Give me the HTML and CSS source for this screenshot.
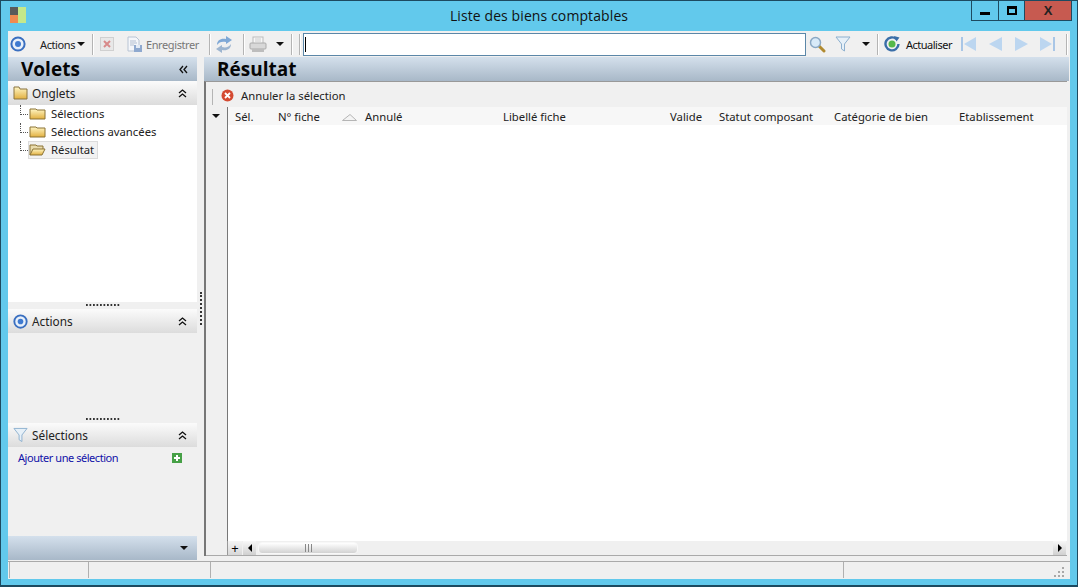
FILE: index.html
```html
<!DOCTYPE html>
<html lang="fr">
<head>
  <meta charset="UTF-8" />
  <title>Liste des biens comptables</title>
  <link rel="stylesheet" href="styles.css">
</head>
<body>
  <svg class="svg-defs" width="0" height="0">
    <defs>
      <linearGradient id="folderFill" x1="0" y1="0" x2="0" y2="1">
        <stop offset="0" stop-color="#fff6c4"/>
        <stop offset="1" stop-color="#e2b040"/>
      </linearGradient>
    </defs>
  </svg>
  <div class="window">
    <div class="titlebar">
      <div class="title-left">
        <svg class="app-icon" width="16" height="16" viewBox="0 0 16 16"><rect width="8" height="8" fill="#5a5a5a"/><rect y="8" width="8" height="8" fill="#f08a50"/><rect x="8" width="8" height="16" fill="#c4e88a"/></svg>
      </div>
      <div class="title-text">Liste des biens comptables</div>
      <div class="win-controls">
        <div class="win-btn btn-min"><span class="min-glyph"></span></div>
        <div class="win-btn btn-max"><span class="max-glyph"></span></div>
        <div class="win-btn btn-close">X</div>
      </div>
    </div>

    <div class="toolbar">
      <svg class="t-actions-icon" width="16" height="16" viewBox="0 0 16 16"><circle cx="8" cy="8" r="6.600" fill="#e8f0fa" stroke="#3a6fc0" stroke-width="2"/><circle cx="8" cy="8" r="3" fill="#3f7ad0"/></svg>
      <span class="t-actions">Actions</span>
      <span class="caret t-actions-caret"></span>
      <span class="sep sep-a"></span>
      <svg class="t-delete" width="14" height="14" viewBox="0 0 14 14"><rect x="0.500" y="0.500" width="13" height="13" fill="#e8e8e8" stroke="#d0d0d0"/><path d="M4 4l6 6M10 4l-6 6" stroke="#d88a8a" stroke-width="2"/></svg>
      <svg class="t-save" width="17" height="17" viewBox="0 0 17 17"><path d="M2 1h8l3 3v11H2z" fill="#f4f6fa" stroke="#b8c4d4"/><path d="M4 5h6M4 7h7M4 9h4" stroke="#b4bfd0"/><rect x="8" y="9" width="8" height="7" fill="#8fa9cf"/><rect x="10" y="9" width="4" height="3" fill="#e4ebf5"/></svg>
      <span class="t-label t-save-label">Enregistrer</span>
      <span class="sep sep-b"></span>
      <svg class="t-sync" width="16" height="17" viewBox="0 0 16 17"><path d="M1 9c0-5 4-7 9-6V0l6 4-6 4V6C6 5 3 6 1 9z" fill="#7fa8d6"/><path d="M15 8c0 5-4 7-9 6v3l-6-4 6-4v2c4 1 7 0 9-3z" fill="#9db5d0"/></svg>
      <span class="sep sep-c"></span>
      <svg class="t-print" width="18" height="17" viewBox="0 0 18 17"><rect x="4" y="1" width="10" height="7" fill="#f7f7f7" stroke="#bbb"/><path d="M6 3h6M6 5h6" stroke="#ccc"/><rect x="1" y="7" width="16" height="6" rx="1" fill="#d8d8d8" stroke="#aaa"/><rect x="3" y="13" width="12" height="3" fill="#bdbdbd"/></svg>
      <span class="caret t-print-caret"></span>
      <span class="sep sep-d"></span>
      <span class="sep sep-e"></span>
      <div class="search-box"><span class="text-cursor"></span></div>
      <svg class="t-search" width="17" height="17" viewBox="0 0 17 17"><path d="M10 10l5 5" stroke="#b08a30" stroke-width="3" stroke-linecap="round"/><circle cx="6.500" cy="6.500" r="5" fill="#d8eaf8" stroke="#8aa8c4" stroke-width="1.500"/></svg>
      <svg class="t-filter" width="16" height="16" viewBox="0 0 16 16"><path d="M1 1h14L9.500 8v7l-3-2V8z" fill="#e6f0f8" stroke="#8db0cf"/></svg>
      <span class="caret t-filter-caret"></span>
      <span class="sep sep-f"></span>
      <svg class="t-refresh" width="16" height="16" viewBox="0 0 16 16"><path d="M12.500 3.200A6.500 6.500 0 1 0 14.500 8" fill="none" stroke="#3a6ea8" stroke-width="2.400"/><path d="M10 0l5.500 1.500-3 4z" fill="#3a6ea8"/><circle cx="8" cy="8" r="3.500" fill="#56b84a"/></svg>
      <span class="t-label t-refresh-label">Actualiser</span>
      <svg class="t-first" width="15" height="14" viewBox="0 0 15 14"><rect x="0" y="0" width="2" height="14" fill="#a9c6e6"/><path d="M15 0v14L3 7z" fill="#bcd6f0"/></svg>
      <svg class="t-prev" width="13" height="14" viewBox="0 0 13 14"><path d="M13 0v14L0 7z" fill="#bcd6f0"/></svg>
      <svg class="t-next" width="13" height="14" viewBox="0 0 13 14"><path d="M0 0v14l13-7z" fill="#bcd6f0"/></svg>
      <svg class="t-last" width="15" height="14" viewBox="0 0 15 14"><path d="M0 0v14l12-7z" fill="#bcd6f0"/><rect x="13" y="0" width="2" height="14" fill="#a9c6e6"/></svg>
      <span class="sep sep-g"></span>
    </div>

    <div class="main">
      <div class="volets">
        <div class="pane-title">
          <span>Volets</span>
          <svg class="collapse-left" width="9" height="9" viewBox="0 0 9 9"><path d="M4 1L1 4.500 4 8M8 1L5 4.500 8 8" fill="none" stroke="#111" stroke-width="1.300"/></svg>
        </div>

        <div class="section-head">
          <svg class="head-icon" width="15" height="14" viewBox="0 0 15 14"><path d="M1 1h5l1 2h7v10H1z" fill="url(#folderFill)" stroke="#8a7440"/></svg>
          <span class="section-name">Onglets</span>
          <svg class="up-icon" width="9" height="9" viewBox="0 0 9 9"><path d="M1 4l3.500-3L8 4M1 8l3.500-3L8 8" fill="none" stroke="#111" stroke-width="1.300"/></svg>
        </div>
        <ul class="tree">
          <li class="tree-row">
            <span class="tree-line"></span>
            <span class="tree-item">
              <svg width="17" height="12" viewBox="0 0 17 12"><path d="M1 1h6l1 1h8v9H1z" fill="url(#folderFill)" stroke="#8b7335"/></svg>
              <span class="tree-label">Sélections</span>
            </span>
          </li>
          <li class="tree-row">
            <span class="tree-line"></span>
            <span class="tree-item">
              <svg width="17" height="12" viewBox="0 0 17 12"><path d="M1 1h6l1 1h8v9H1z" fill="url(#folderFill)" stroke="#8b7335"/></svg>
              <span class="tree-label">Sélections avancées</span>
            </span>
          </li>
          <li class="tree-row">
            <span class="tree-line"></span>
            <span class="tree-item tree-selected">
              <svg width="17" height="12" viewBox="0 0 17 12"><path d="M1 11V1h6l1 1h6v3" fill="#e9dcae" stroke="#8b7335"/><path d="M1 11l3-6h12l-3 6z" fill="url(#folderFill)" stroke="#8b7335"/></svg>
              <span class="tree-label">Résultat</span>
            </span>
          </li>
        </ul>

        <div class="grip"></div>
        <div class="section-head">
          <svg class="head-icon" width="15" height="15" viewBox="0 0 16 16"><circle cx="8" cy="8" r="6.600" fill="#e8f0fa" stroke="#3a6fc0" stroke-width="2"/><circle cx="8" cy="8" r="3" fill="#3f7ad0"/></svg>
          <span class="section-name">Actions</span>
          <svg class="up-icon" width="9" height="9" viewBox="0 0 9 9"><path d="M1 4l3.500-3L8 4M1 8l3.500-3L8 8" fill="none" stroke="#111" stroke-width="1.300"/></svg>
        </div>
        <div class="section-body actions-body"></div>

        <div class="grip"></div>
        <div class="section-head">
          <svg class="head-icon" width="15" height="16" viewBox="0 0 16 16"><path d="M1 1h14L9.500 8v7l-3-2V8z" fill="#e6f0f8" stroke="#8db0cf"/></svg>
          <span class="section-name">Sélections</span>
          <svg class="up-icon" width="9" height="9" viewBox="0 0 9 9"><path d="M1 4l3.500-3L8 4M1 8l3.500-3L8 8" fill="none" stroke="#111" stroke-width="1.300"/></svg>
        </div>
        <div class="section-body selections-body">
          <a class="add-link">Ajouter une sélection</a>
          <svg class="add-icon" width="10" height="10" viewBox="0 0 10 10"><rect width="10" height="10" fill="#46a046"/><path d="M5 2v6M2 5h6" stroke="#fff" stroke-width="2"/></svg>
        </div>

        <div class="pane-footer"><span class="caret"></span></div>
      </div>

      <div class="v-splitter"><span class="v-grip"></span></div>

      <div class="result">
        <div class="pane-title result-title">Résultat</div>
        <div class="result-frame">
          <div class="result-toolbar">
            <svg width="13" height="13" viewBox="0 0 13 13"><circle cx="6.500" cy="6.500" r="6" fill="#d44a32"/><path d="M4 4l5 5M9 4l-5 5" stroke="#fff" stroke-width="1.800"/></svg>
            <span class="cancel-label">Annuler la sélection</span>
          </div>
          <div class="grid-head">
            <div class="gutter-head"><span class="caret"></span></div>
            <div class="col col-sel">Sél.</div>
            <div class="col col-num">N° fiche
              <svg class="sort-mark" width="15" height="7" viewBox="0 0 15 7"><path d="M0.500 6.500h14L8 .5z" fill="#f4f4f4" stroke="#b5b5b5"/></svg>
            </div>
            <div class="col col-annule">Annulé</div>
            <div class="col col-libelle">Libellé fiche</div>
            <div class="col col-valide">Valide</div>
            <div class="col col-statut">Statut composant</div>
            <div class="col col-cat">Catégorie de bien</div>
            <div class="col col-etab">Etablissement</div>
          </div>
          <div class="grid-body">
            <div class="gutter"></div>
            <div class="rows"></div>
          </div>
          <div class="grid-scroll">
            <div class="plus-cell">+</div>
            <div class="scroll-btn"><span class="tri-left"></span></div>
            <div class="scroll-track"><div class="scroll-thumb"><span class="thumb-lines"></span></div></div>
            <div class="scroll-btn"><span class="tri-right"></span></div>
          </div>
        </div>
      </div>
    </div>

    <div class="statusbar">
      <div class="status-cell cell-1"></div>
      <div class="status-cell cell-2"></div>
      <div class="status-cell cell-3"></div>
      <div class="status-cell cell-4">
        <svg width="11" height="11" viewBox="0 0 11 11" fill="#a8a8a8"><rect x="8" y="0" width="2" height="2"/><rect x="4" y="4" width="2" height="2"/><rect x="8" y="4" width="2" height="2"/><rect x="0" y="8" width="2" height="2"/><rect x="4" y="8" width="2" height="2"/><rect x="8" y="8" width="2" height="2"/></svg>
      </div>
    </div>
  </div>
</body>
</html>
```

FILE: styles.css
```css
html, body {
  margin: 0;
  padding: 0;
  height: 100%;
  overflow: hidden;
}
body {
  font-family: "Noto Sans", "Open Sans", sans-serif;
  font-size: 11.3px;
  color: #222;
}
ul {
  list-style: none;
  margin: 0;
  padding: 0;
}
.svg-defs {
  display: block;
  height: 0;
}
.window {
  box-sizing: border-box;
  width: 1078px;
  height: 587px;
  background: #62c9ec;
  border: 1px solid #1d4a60;
  border-bottom-width: 2px;
  display: flex;
  flex-direction: column;
  padding: 0 7px 6px 7px;
}

/* title bar */
.titlebar {
  height: 30px;
  flex: none;
  display: grid;
  grid-template-columns: 1fr auto 1fr;
  margin: 0 -7px;
}
.title-left {
  padding: 6px 0 0 9px;
}
.app-icon {
  display: block;
}
.title-text {
  font-family: "Open Sans", sans-serif;
  font-size: 14px;
  letter-spacing: 0.1px;
  line-height: 30px;
  color: #111;
}
.win-controls {
  display: flex;
  justify-content: flex-end;
  height: 20px;
  padding-right: 5px;
}
.win-btn {
  box-sizing: border-box;
  border: 1px solid #1d4a60;
  border-top: none;
  border-left: none;
  display: flex;
  align-items: center;
  justify-content: center;
}
.btn-min {
  width: 28px;
  border-left: 1px solid #1d4a60;
}
.btn-max {
  width: 26px;
}
.btn-close {
  width: 47px;
  background: #c75a50;
  font-family: "Liberation Sans", sans-serif;
  font-weight: bold;
  font-size: 13px;
}
.min-glyph {
  width: 10px;
  height: 3px;
  background: #000;
  margin-top: 6px;
}
.max-glyph {
  box-sizing: border-box;
  width: 10px;
  height: 9px;
  border: 2px solid #000;
  border-top-width: 3px;
}

/* toolbar */
.toolbar {
  height: 26px;
  flex: none;
  display: flex;
  align-items: center;
  background: #f0f0f0;
  padding-left: 2px;
}
.toolbar svg {
  flex: none;
}
.caret {
  display: inline-block;
  flex: none;
  width: 0;
  height: 0;
  border-left: 4px solid transparent;
  border-right: 4px solid transparent;
  border-top: 4px solid #111;
}
.sep {
  flex: none;
  width: 1px;
  height: 21px;
  background: #b4b4b4;
  border-right: 1px solid #fff;
}
.t-actions {
  flex: none;
  width: 35px;
  margin-left: 14px;
  font-size: 11px;
  letter-spacing: -0.4px;
  white-space: nowrap;
}
.t-actions-caret { margin-left: 2px; }
.sep-a { margin-left: 7px; }
.t-delete { margin-left: 6px; }
.t-save { margin-left: 12px; }
.t-label { flex: none; font-size: 11px; letter-spacing: -0.4px; white-space: nowrap; }
.t-save-label { width: 53px; margin-left: 3px; color: #777; }
.sep-b { margin-left: 10px; }
.t-sync { margin-left: 5px; }
.sep-c { margin-left: 11px; }
.t-print { margin-left: 4px; }
.t-print-caret { margin-left: 9px; }
.sep-d { margin-left: 7px; }
.sep-e { margin-left: 6px; }
.search-box {
  box-sizing: border-box;
  flex: 1;
  height: 23px;
  margin-left: 2px;
  background: #fff;
  border: 1px solid #5b87a8;
  padding: 3px 0 0 1px;
}
.text-cursor {
  display: block;
  width: 1px;
  height: 15px;
  background: #000;
}
.t-search { margin-left: 3px; }
.t-filter { margin-left: 9px; }
.t-filter-caret { margin-left: 11px; }
.sep-f { margin-left: 7px; }
.t-refresh { margin-left: 5px; }
.t-refresh-label { width: 46px; margin-left: 6px; color: #111; letter-spacing: -0.5px; }
.t-first { margin-left: 9px; }
.t-prev { margin-left: 13px; }
.t-next { margin-left: 13px; }
.t-last { margin-left: 12px; }
.sep-g { margin-left: 11px; margin-right: 2px; }

/* main */
.main {
  flex: 1;
  min-height: 0;
  display: flex;
  background: #f0f0f0;
}
.volets {
  width: 189px;
  flex: none;
  display: flex;
  flex-direction: column;
}
.pane-title {
  height: 24px;
  flex: none;
  box-sizing: border-box;
  background: linear-gradient(#d4e0ec, #a8b8c8);
  font-family: "Open Sans", sans-serif;
  font-weight: bold;
  font-size: 19px;
  line-height: 24px;
  color: #050505;
  padding-left: 13px;
  padding-right: 9px;
  display: flex;
  align-items: center;
  justify-content: space-between;
}
.section-head {
  height: 24px;
  flex: none;
  display: flex;
  align-items: center;
  background: linear-gradient(#fbfbfb, #dcdcdc);
  padding: 0 10px 0 5px;
}
.head-icon {
  flex: none;
}
.section-name {
  flex: 1;
  margin-left: 4px;
  font-size: 11.800px;
}
.tree {
  height: 197px;
  flex: none;
  background: #fff;
  padding-left: 12px;
  box-sizing: border-box;
}
.tree-row {
  height: 18px;
  display: flex;
  align-items: center;
}
.tree-line {
  box-sizing: border-box;
  flex: none;
  align-self: flex-start;
  width: 8px;
  height: 10px;
  border-left: 1px dotted #555;
  border-bottom: 1px dotted #555;
}
.tree-item {
  display: flex;
  align-items: center;
  padding-right: 3px;
  border: 1px solid transparent;
  height: 16px;
}
.tree-item svg {
  flex: none;
}
.tree-label {
  margin-left: 5px;
  line-height: 16px;
}
.tree-selected {
  background: #f2f2f2;
  border-color: #dcdcdc;
}
.grip {
  height: 7px;
  flex: none;
  box-sizing: border-box;
  padding: 2px 77px 3px 78px;
  background: radial-gradient(circle at 1px 1px, #333 1px, transparent 1px) 0 0 / 3.500px 2px repeat-x content-box;
}
.section-body {
  flex: none;
}
.actions-body {
  height: 83px;
}
.selections-body {
  flex: 1;
  display: flex;
  justify-content: space-between;
  align-items: flex-start;
  padding: 4px 15px 0 10px;
}
.add-link {
  color: #1010a8;
  font-size: 11px;
  letter-spacing: -0.45px;
  line-height: 14px;
}
.add-icon {
  margin-top: 2px;
}
.pane-footer {
  height: 24px;
  flex: none;
  box-sizing: border-box;
  background: linear-gradient(#d4e0ec, #a8b8c8);
  display: flex;
  align-items: center;
  justify-content: flex-end;
  padding-right: 9px;
}
.v-splitter {
  width: 7px;
  flex: none;
  box-sizing: border-box;
  padding: 235px 0 0 3px;
}
.v-grip {
  display: block;
  width: 2px;
  height: 33px;
  border-left: 2px dotted #333;
}

/* result panel */
.result {
  flex: 1;
  min-width: 0;
  display: flex;
  flex-direction: column;
  margin-right: 1px;
}
.result-title {
  padding-left: 13px;
}
.result-frame {
  flex: 1;
  min-height: 0;
  margin: 0 2px 4px 0;
  border-left: 2px solid #777;
  border-top: 1px solid #999;
  display: flex;
  flex-direction: column;
  background: #f0f0f0;
}
.result-toolbar {
  height: 25px;
  flex: none;
  box-sizing: border-box;
  margin-left: 6px;
  padding: 2px 0 0 9px;
  background: linear-gradient(#b4b4b4, #b4b4b4) 0 7px / 1px 16px no-repeat;
  display: flex;
  align-items: center;
}
.cancel-label {
  margin-left: 7px;
}
.grid-head {
  height: 18px;
  flex: none;
  display: flex;
  align-items: center;
  background: #f7f7f7;
}
.gutter-head {
  width: 22px;
  flex: none;
  align-self: stretch;
  box-sizing: border-box;
  background: #f0f0f0;
  border-right: 1px solid #777;
  display: flex;
  align-items: center;
  padding-left: 6px;
}
.col {
  flex: none;
  white-space: nowrap;
}
.col-sel { width: 43px; margin-left: 7px; }
.col-num { width: 87px; display: flex; align-items: center; }
.sort-mark { margin-left: 22px; margin-top: 3px; }
.col-annule { width: 138px; }
.col-libelle { width: 167px; }
.col-valide { width: 49px; }
.col-statut { width: 115px; }
.col-cat { width: 125px; }
.col-etab { width: 80px; }
.grid-body {
  flex: 1;
  min-height: 0;
  display: flex;
}
.gutter {
  width: 22px;
  flex: none;
  box-sizing: border-box;
  background: #f0f0f0;
  border-right: 1px solid #777;
}
.rows {
  flex: 1;
  background: #fff;
}
.grid-scroll {
  height: 14px;
  flex: none;
  display: flex;
  align-items: stretch;
  background: #f0f0f0;
  border-bottom: 1px solid #aaa;
  padding: 0 1px 0 21px;
}
.plus-cell {
  width: 15px;
  flex: none;
  margin-right: 1px;
  text-align: center;
  line-height: 14px;
  font-size: 13px;
  color: #000;
  background: linear-gradient(#f4f4f4, #d8d8d8);
  border-left: 1px solid #999;
  box-sizing: border-box;
}
.scroll-btn {
  width: 13px;
  flex: none;
  background: linear-gradient(#f8f8f8, #d0d0d0);
  display: flex;
  align-items: center;
  justify-content: center;
}
.tri-left, .tri-right {
  width: 0;
  height: 0;
  border-top: 4px solid transparent;
  border-bottom: 4px solid transparent;
}
.tri-left { border-right: 4px solid #000; }
.tri-right { border-left: 4px solid #000; }
.scroll-track {
  flex: 1;
  padding: 1px 0 1px 2px;
}
.scroll-thumb {
  box-sizing: border-box;
  width: 100px;
  height: 100%;
  border-radius: 4px;
  background: linear-gradient(#ffffff, #d2d2d2);
  border: 1px solid #f8f8f8;
  display: flex;
  align-items: center;
  justify-content: center;
}
.thumb-lines {
  width: 7px;
  height: 8px;
  border-left: 1px solid #888;
  border-right: 1px solid #888;
  box-sizing: border-box;
  background: linear-gradient(#888, #888) center / 1px 100% no-repeat;
}

/* status bar */
.statusbar {
  height: 19px;
  flex: none;
  box-sizing: border-box;
  display: flex;
  padding: 2px 0 1px 1px;
  background: linear-gradient(#aaa, #aaa) 0 1px / 100% 1px no-repeat #f0f0f0;
}
.status-cell {
  box-sizing: border-box;
  border-right: 1px solid #b0b0b0;
}
.cell-1 { width: 80px; border-left: 1px solid #b0b0b0; }
.cell-2 { width: 122px; }
.cell-3 { width: 633px; }
.cell-4 {
  flex: 1;
  border-right: none;
  display: flex;
  justify-content: flex-end;
  align-items: flex-end;
  padding-right: 5px;
}
```
